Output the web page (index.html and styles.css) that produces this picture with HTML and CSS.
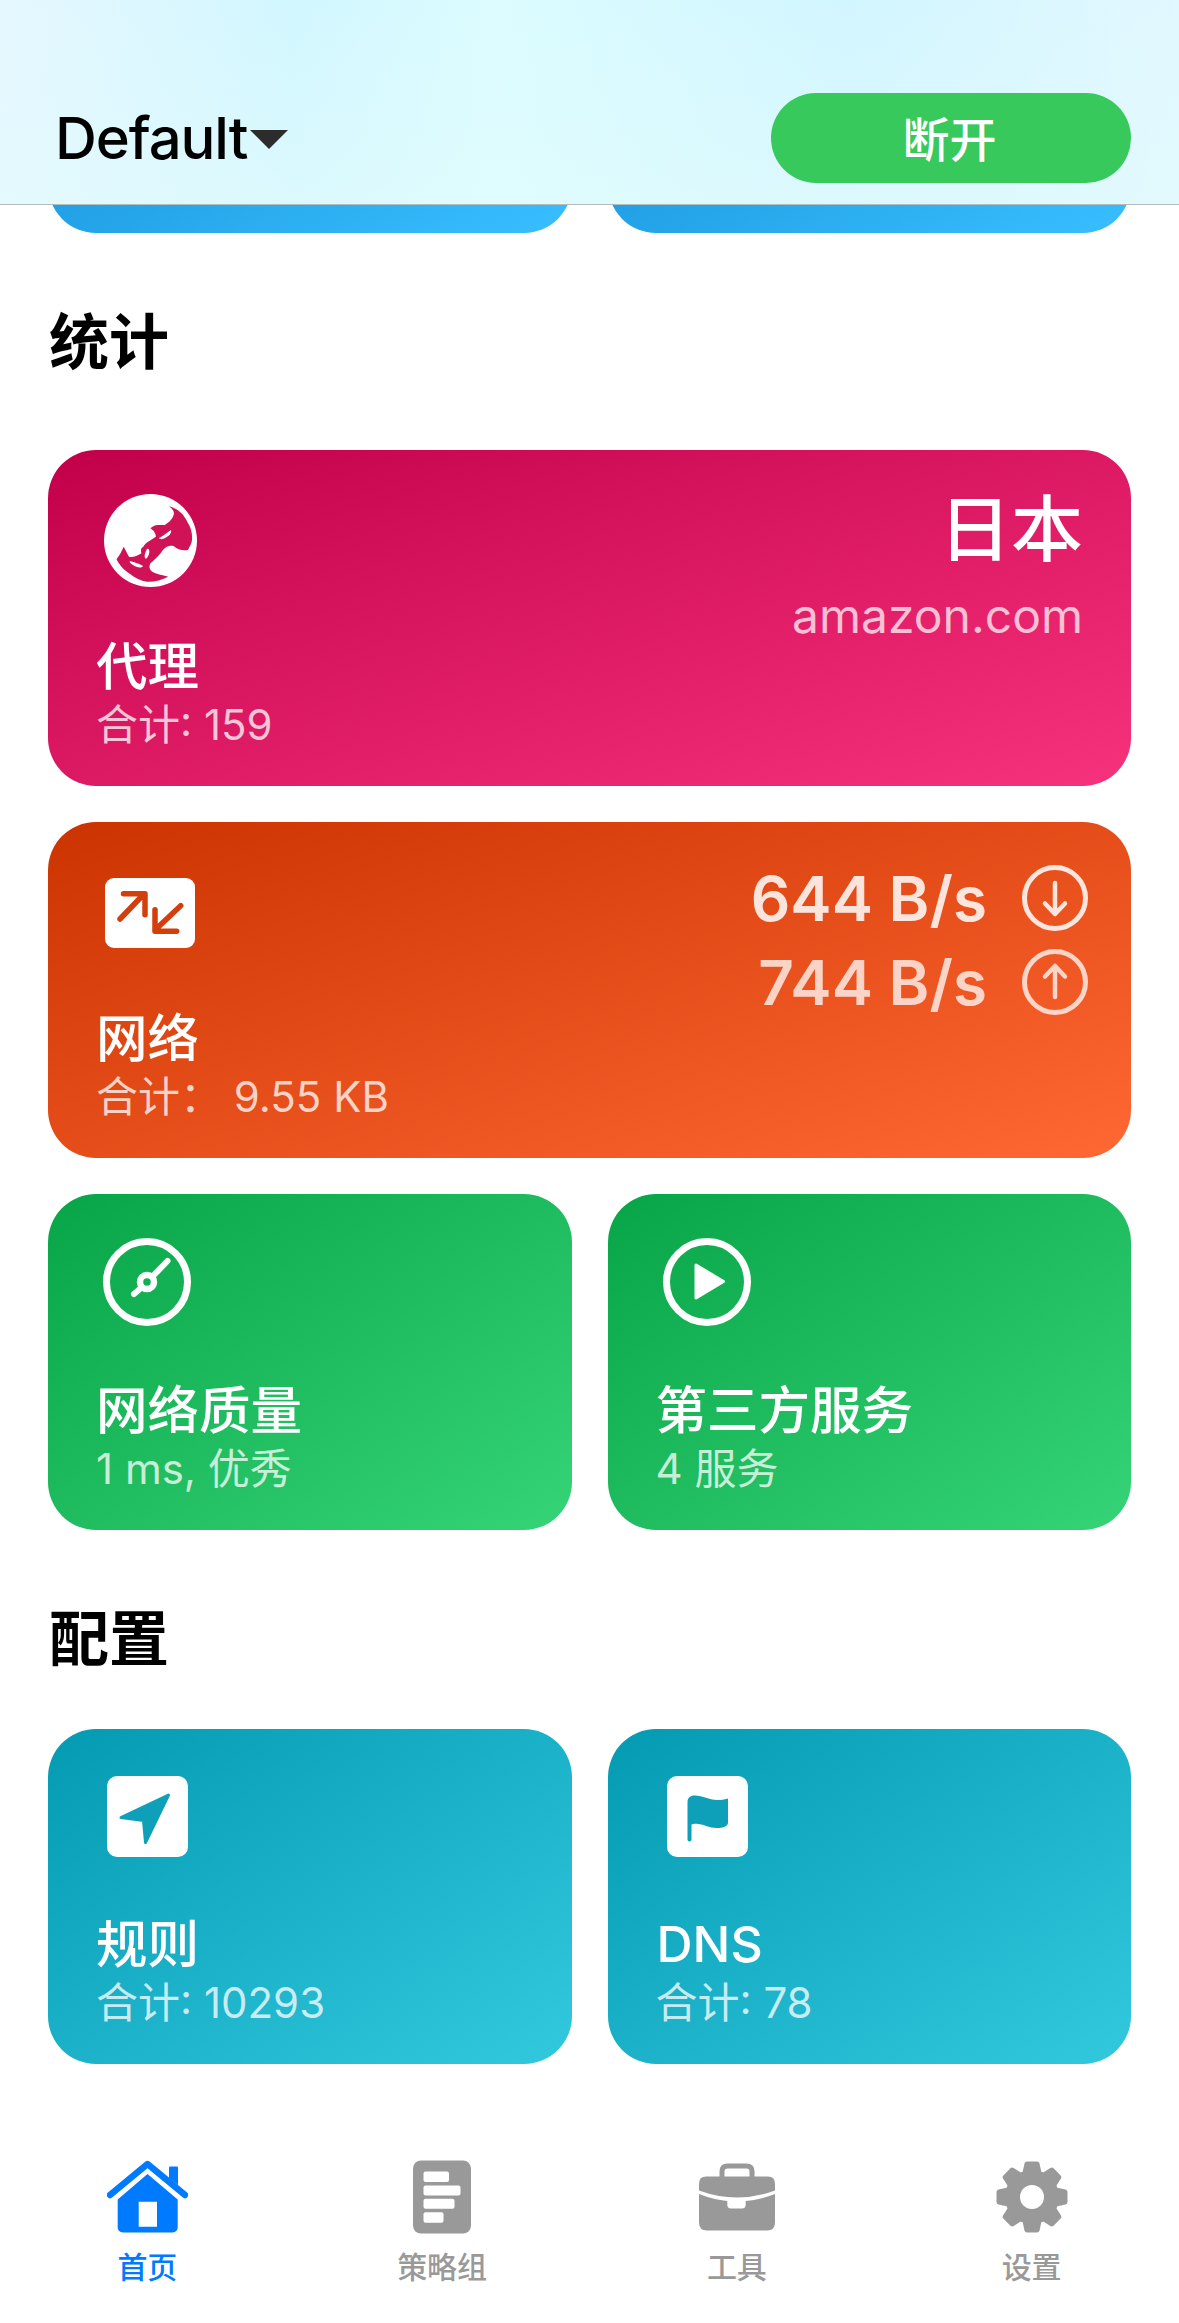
FILE: index.html
```html
<!DOCTYPE html>
<html lang="zh-CN">
<head>
  <meta charset="UTF-8">
  <meta name="viewport" content="width=device-width, initial-scale=1.0">
  <title>Default</title>
  <link rel="stylesheet" href="styles.css">
</head>
<body>

  <header class="topbar">
    <div class="profile">
      <span class="profile-name">Default</span>
      <svg class="caret" viewBox="0 0 40 20"><path d="M0 0H40L20 20Z" fill="#2c2c2c"/></svg>
    </div>
    <button class="connect">断开</button>
  </header>

  <div class="peek">
    <div class="card card-blue"></div>
    <div class="card card-blue"></div>
  </div>

  <h2 class="title title-stats">统计</h2>
  <section class="cards">
    <div class="card card-red wide">
      <div class="card-top">
        <svg class="icon icon-globe" viewBox="0 0 93 93">
          <circle cx="46.5" cy="46.5" r="46.5" fill="#fff"/>
          <path fill="#d01257" d="M64.3 12C68 14 71 18 69.6 21C68 26 64 29 60.7 31C56 31 50 30 46.4 34.3C49 36 52 39 51.8 42.7C47 46 41 49 39.3 52.7C36 54 37 58 37.5 59.3C33 62 28 64 25 62.7C23 59 21 55 19.6 52.7C18 57 15 62 12.5 65.3C16 72 20 76 25 79.3C31 84 37 87 42.9 87.7C50 88 58 86 64.3 82.7C58 81 52 80 48.2 77.7C45 75 45 72 46.4 69.3C50 66 55 62 58.9 56C62 52 66 51 69.6 52C74 56 79 57 83.9 56C86 52 87.500 50 88 46C88.500 40 87 34 84.500 30C82 25 79 20 76 18C73 15 68 13 64.3 12Z"/>
          <path fill="#fff" d="M55 44C59 42 64 38 67 36C68 39 65 42 61 44C59 45 56 46 55 44ZM43 55C45 54 46 57 45 60C44 63 42 66 41 64C40 62 41 58 43 55ZM26 67C30 68 36 70 39 72C37 75 32 73 29 71C27 70 25 68 26 67Z"/>
        </svg>
        <div class="card-right">
          <div class="country">日本</div>
          <div class="host">amazon.com</div>
        </div>
      </div>
      <div class="card-foot">
        <div class="card-label">代理</div>
        <div class="card-sub">合计: 159</div>
      </div>
    </div>

    <div class="card card-orange wide">
      <div class="card-top">
        <svg class="icon icon-net" viewBox="0 0 90 70">
          <rect width="90" height="70" rx="9" fill="#fff"/>
          <path d="M15 41L38 17M18.5 15.7H40V36.7M75.7 27.7L50 52M50 31.7V53.3H71.7" fill="none" stroke="#d33f0c" stroke-width="5.5" stroke-linecap="round" stroke-linejoin="round"/>
        </svg>
        <div class="speeds">
          <div class="speed speed-down">
            <span>644 B/s</span>
            <svg class="speed-icon" viewBox="0 0 66 66">
              <circle cx="33" cy="33" r="30.5" fill="none" stroke="currentColor" stroke-width="5"/>
              <path d="M33 18V49M23 38.5L33 49L43 38.5" fill="none" stroke="currentColor" stroke-width="4.5" stroke-linecap="round" stroke-linejoin="round"/>
            </svg>
          </div>
          <div class="speed speed-up">
            <span>744 B/s</span>
            <svg class="speed-icon" viewBox="0 0 66 66">
              <circle cx="33" cy="33" r="30.5" fill="none" stroke="currentColor" stroke-width="5"/>
              <path d="M33 48V17M23 27.5L33 17L43 27.5" fill="none" stroke="currentColor" stroke-width="4.5" stroke-linecap="round" stroke-linejoin="round"/>
            </svg>
          </div>
        </div>
      </div>
      <div class="card-foot">
        <div class="card-label">网络</div>
        <div class="card-sub">合计： 9.55 KB</div>
      </div>
    </div>

    <div class="card card-green">
      <div class="card-top">
        <svg class="icon icon-round" viewBox="0 0 88 88">
          <circle cx="44" cy="44" r="40.5" fill="none" stroke="#fff" stroke-width="7"/>
          <circle cx="44" cy="44" r="7" fill="none" stroke="#fff" stroke-width="6.5"/>
          <path d="M31 56L38 50M50 38L64.5 23" fill="none" stroke="#fff" stroke-width="6" stroke-linecap="round"/>
        </svg>
      </div>
      <div class="card-foot">
        <div class="card-label">网络质量</div>
        <div class="card-sub">1 ms, 优秀</div>
      </div>
    </div>

    <div class="card card-green">
      <div class="card-top">
        <svg class="icon icon-round" viewBox="0 0 88 88">
          <circle cx="44" cy="44" r="40.5" fill="none" stroke="#fff" stroke-width="7"/>
          <path d="M33 27L60.5 43.5L33 60Z" fill="#fff" stroke="#fff" stroke-width="3" stroke-linejoin="round"/>
        </svg>
      </div>
      <div class="card-foot">
        <div class="card-label">第三方服务</div>
        <div class="card-sub">4 服务</div>
      </div>
    </div>
  </section>

  <h2 class="title title-config">配置</h2>
  <section class="cards">
    <div class="card card-teal">
      <div class="card-top">
        <svg class="icon icon-square" viewBox="0 0 81 81">
          <rect width="81" height="81" rx="10" fill="#fff"/>
          <path d="M61.500 19L14 41.500L36.500 44.500L38.500 66.500Z" fill="#0fa0b9" stroke="#0fa0b9" stroke-width="3" stroke-linejoin="round"/>
        </svg>
      </div>
      <div class="card-foot">
        <div class="card-label">规则</div>
        <div class="card-sub">合计: 10293</div>
      </div>
    </div>

    <div class="card card-teal">
      <div class="card-top">
        <svg class="icon icon-square" viewBox="0 0 81 81">
          <rect width="81" height="81" rx="10" fill="#fff"/>
          <path d="M20.5 26C20.5 21 24 19.5 28 19.5C36 19.5 42 24 50 24C54 24 57 23.5 61 22.5V47C61 50 56 52 50 52C42 52 36 47.7 29 47.7C27 47.7 25.5 48 24.5 48.5V63.5A2 2 0 0 1 20.5 63.5Z" fill="#0fa0b9"/>
        </svg>
      </div>
      <div class="card-foot">
        <div class="card-label card-label-latin">DNS</div>
        <div class="card-sub">合计: 78</div>
      </div>
    </div>
  </section>

  <nav class="tabs">
    <div class="tab active">
      <svg class="tab-icon" width="81" height="72" viewBox="0 0 81 72">
        <path d="M62 6.5Q62 5.5 63 5.5H70Q71 5.5 71 6.5V24L62 17Z" fill="currentColor"/>
        <path d="M3 34L40.5 3L78 34" fill="none" stroke="currentColor" stroke-width="6.5" stroke-linecap="round" stroke-linejoin="round"/>
        <path fill-rule="evenodd" d="M40.5 13L70.7 38.5V66.5A5 5 0 0 1 65.7 71.5H15.7A5 5 0 0 1 10.7 66.5V38.5ZM31.7 40.7V65.7H50V40.7Z" fill="currentColor"/>
      </svg>
      <span>首页</span>
    </div>
    <div class="tab">
      <svg class="tab-icon" width="58" height="73" viewBox="0 0 58 73">
        <rect width="58" height="73" rx="8" fill="currentColor"/>
        <rect x="10.5" y="11" width="25.5" height="10.5" rx="2" fill="#fff"/>
        <rect x="10.5" y="25" width="37" height="10" rx="2" fill="#fff"/>
        <rect x="10.5" y="38.3" width="31" height="10" rx="2" fill="#fff"/>
        <rect x="10.5" y="51.7" width="20" height="10.5" rx="2" fill="#fff"/>
      </svg>
      <span>策略组</span>
    </div>
    <div class="tab">
      <svg class="tab-icon" width="76" height="67" viewBox="0 0 76 67">
        <path d="M23 14V8Q23 2.500 28.500 2.500H47.500Q53 2.500 53 8V14" fill="none" stroke="currentColor" stroke-width="5"/>
        <path d="M0 27V20Q0 13 7 13H69Q76 13 76 20V27Q57 34 38 34Q19 34 0 27Z" fill="currentColor"/>
        <path d="M0 30.500Q14 36 28.300 37.500V41Q28.300 45 32 45H43Q46.700 45 46.700 41V37.500Q62 36 76 30.500V59Q76 67 68 67H8Q0 67 0 59Z" fill="currentColor"/>
      </svg>
      <span>工具</span>
    </div>
    <div class="tab">
      <svg class="tab-icon" width="72" height="72" viewBox="0 0 72 72">
        <defs>
          <path id="tooth" d="M26 14L28.500 2.500Q29 0.500 31 0.500H41Q43 0.500 43.500 2.500L46 14Z" fill="currentColor"/>
        </defs>
        <circle cx="36" cy="36" r="27" fill="currentColor"/>
        <use href="#tooth"/>
        <use href="#tooth" transform="rotate(45 36 36)"/>
        <use href="#tooth" transform="rotate(90 36 36)"/>
        <use href="#tooth" transform="rotate(135 36 36)"/>
        <use href="#tooth" transform="rotate(180 36 36)"/>
        <use href="#tooth" transform="rotate(225 36 36)"/>
        <use href="#tooth" transform="rotate(270 36 36)"/>
        <use href="#tooth" transform="rotate(315 36 36)"/>
        <circle cx="36" cy="36" r="12" fill="#fff"/>
      </svg>
      <span>设置</span>
    </div>
  </nav>

</body>
</html>
```

FILE: styles.css
```css
* {
  box-sizing: border-box;
}

body {
  margin: 0;
  width: 1179px;
  height: 2323px;
  overflow: hidden;
  display: flex;
  flex-direction: column;
  background-color: #fff;
  color: #000;
  font-family: Inter, "Noto Sans CJK SC", sans-serif;
}

/* top bar */
.topbar {
  flex: none;
  height: 205px;
  padding: 93px 48px 21px 55px;
  display: flex;
  align-items: center;
  justify-content: space-between;
  background:
    linear-gradient(180deg, rgba(224, 250, 255, 0.1), rgba(226, 251, 252, 0.6)),
    linear-gradient(90deg, #e6f7ff 0%, #d0f6ff 25%, #dbfcff 42%, #d4f8ff 60%, #d0f5ff 72%, #e2f7ff 100%);
  border-bottom: 1px solid #b4bcbc;
}

.profile {
  display: flex;
  align-items: center;
  gap: 3px;
}

.profile-name {
  font-size: 58px;
  font-weight: 500;
  letter-spacing: -1.1px;
}

.caret {
  width: 38px;
  height: 19px;
  margin-top: 2px;
}

.connect {
  width: 360px;
  height: 90px;
  padding: 0 3px 3px 0;
  border: 0;
  border-radius: 45px;
  background-color: #38c95c;
  color: #fff;
  font-family: inherit;
  font-size: 47px;
  font-weight: 500;
}

/* cards */
.peek {
  flex: none;
  height: 28px;
  margin: 0 48px;
  display: grid;
  grid-template-columns: 1fr 1fr;
  grid-template-rows: 28px;
  gap: 36px;
  align-items: end;
  overflow: hidden;
}

.peek .card {
  height: 335px;
}

.title {
  flex: none;
  margin: 0 0 0 49px;
  font-size: 60px;
  font-weight: 700;
  line-height: 80px;
}

.title-stats {
  margin-top: 69px;
  margin-bottom: 68px;
}

.title-config {
  margin-top: 69px;
  margin-bottom: 50px;
}

.cards {
  flex: none;
  margin: 0 48px;
  display: grid;
  grid-template-columns: 1fr 1fr;
  gap: 36.5px 36px;
}

.card {
  height: 335.5px;
  padding: 0 43px 34px 48px;
  border-radius: 48px;
  display: flex;
  flex-direction: column;
  color: #fff;
}

.wide {
  grid-column: span 2;
}

.card-blue {
  background: linear-gradient(to bottom right, #0f86cf, #38bfff);
}

.card-red {
  background: linear-gradient(to bottom right, #c2004a, #f7327d);
}

.card-orange {
  background: linear-gradient(to bottom right, #cb3300, #ff6733);
}

.card-green {
  background: linear-gradient(to bottom right, #08a548, #35d476);
}

.card-teal {
  background: linear-gradient(to bottom right, #049ab2, #32c8de);
}

.card-top {
  height: 180px;
  display: flex;
  justify-content: space-between;
  align-items: flex-start;
}

.card-foot {
  margin-top: auto;
}

.card-label {
  font-size: 51.5px;
  font-weight: 500;
  line-height: 64px;
}

.card-label-latin {
  padding-left: 1px;
  font-size: 50px;
}

.card-sub {
  font-size: 42px;
  line-height: 54px;
  color: rgba(255, 255, 255, 0.75);
}

.icon {
  flex: none;
}

.icon-globe {
  width: 93px;
  height: 93px;
  margin: 44px 0 0 8px;
}

.icon-net {
  width: 90px;
  height: 70px;
  margin: 56px 0 0 9px;
}

.icon-round {
  width: 88px;
  height: 88px;
  margin: 44px 0 0 7px;
}

.icon-square {
  width: 81px;
  height: 81px;
  margin: 47px 0 0 11px;
}

.card-right {
  margin-top: 39px;
  padding-right: 5px;
  text-align: right;
}

.country {
  font-size: 72px;
  font-weight: 500;
  line-height: 80px;
}

.host {
  margin-top: 16px;
  font-size: 48px;
  line-height: 62px;
  color: rgba(255, 255, 255, 0.72);
}

.speeds {
  margin-top: 43px;
  display: flex;
  flex-direction: column;
  gap: 18px;
}

.speed {
  height: 66px;
  display: flex;
  align-items: center;
  justify-content: flex-end;
  gap: 35px;
  font-size: 62px;
  font-weight: 600;
}

.speed-down {
  color: rgba(255, 255, 255, 0.85);
}

.speed-up {
  color: rgba(255, 255, 255, 0.75);
}

.speed-icon {
  width: 66px;
  height: 66px;
}

/* tab bar */
.tabs {
  flex: none;
  margin-top: auto;
  height: 175px;
  padding-top: 9px;
  display: grid;
  grid-template-columns: repeat(4, 1fr);
}

.tab {
  display: flex;
  flex-direction: column;
  align-items: center;
  color: #999;
  font-size: 30px;
  font-weight: 500;
  line-height: 40px;
}

.tab.active {
  color: #007aff;
}

.tab-icon {
  height: 80px;
  margin-bottom: 10px;
}
```
